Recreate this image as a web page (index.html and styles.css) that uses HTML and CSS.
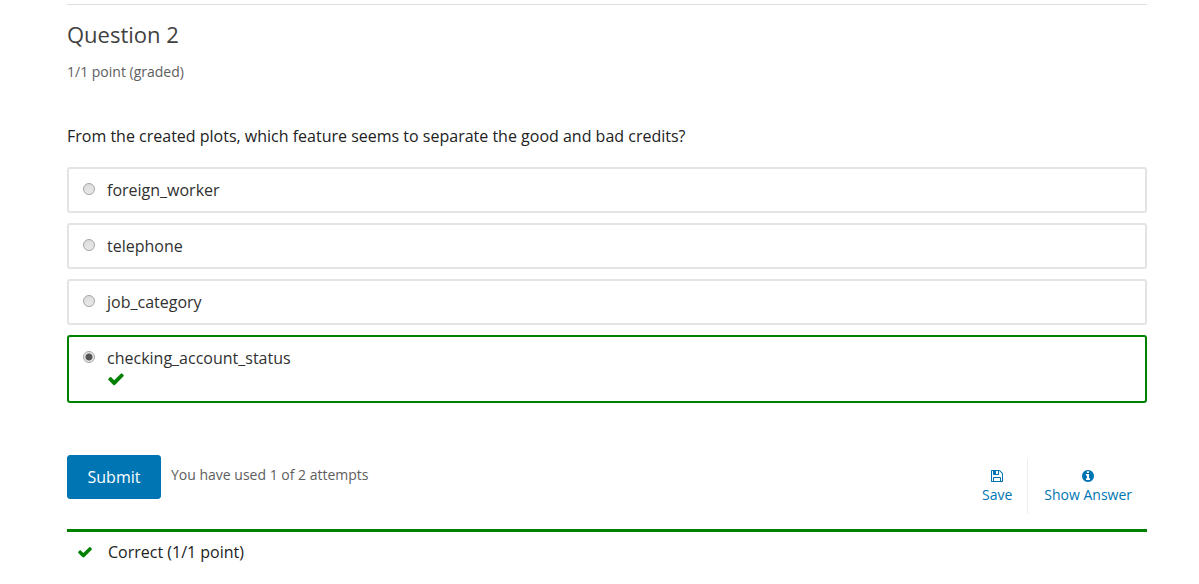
FILE: index.html
```html
<!DOCTYPE html>
<html lang="en">
<head>
<meta charset="utf-8">
<title>Question 2</title>
<link rel="stylesheet" href="styles.css">
</head>
<body>
<main class="problem">
  <h3 class="problem-header">Question 2</h3>
  <div class="problem-progress">1/1 point (graded)</div>
  <form class="problem-form">
    <fieldset class="choices">
      <legend class="question">From the created plots, which feature seems to separate the good and bad credits?</legend>
      <label class="choice"><input class="radio" type="radio" name="feature"><span>foreign_worker</span></label>
      <label class="choice"><input class="radio" type="radio" name="feature"><span>telephone</span></label>
      <label class="choice"><input class="radio" type="radio" name="feature"><span>job_category</span></label>
      <label class="choice choice-correct"><input class="radio" type="radio" name="feature" checked><span>checking_account_status</span>
        <svg class="choice-check" viewBox="0 0 1792 1792" aria-hidden="true"><path d="M1671 566q0 40-28 68l-724 724-136 136q-28 28-68 28t-68-28l-136-136-362-362q-28-28-28-68t28-68l136-136q28-28 68-28t68 28l294 295 656-657q28-28 68-28t68 28l136 136q28 28 28 68z"/></svg>
      </label>
    </fieldset>
    <div class="action">
      <button class="submit" type="button">Submit</button>
      <div class="attempts">You have used 1 of 2 attempts</div>
      <div class="tools">
        <button class="tool" type="button">
          <svg class="tool-icon" viewBox="0 0 1792 1792" aria-hidden="true"><path d="M512 1536h768v-384h-768v384zm896 0h128v-896q0-14-10-38.500t-20-34.500l-281-281q-10-10-34-20t-39-10v416q0 40-28 68t-68 28h-576q-40 0-68-28t-28-68v-416h-128v1280h128v-416q0-40 28-68t68-28h832q40 0 68 28t28 68v416zm-384-928v-320q0-13-9.500-22.500t-22.500-9.500h-192q-13 0-22.500 9.500t-9.500 22.500v320q0 13 9.500 22.500t22.500 9.500h192q13 0 22.500-9.500t9.500-22.500zm640 32v928q0 40-28 68t-68 28h-1344q-40 0-68-28t-28-68v-1344q0-40 28-68t68-28h928q40 0 88 20t76 48l280 280q28 28 48 76t20 88z"/></svg>
          <span>Save</span>
        </button>
        <button class="tool" type="button">
          <svg class="tool-icon" viewBox="0 0 1792 1792" aria-hidden="true"><path d="M1152 1376v-160q0-14-9-23t-23-9h-96v-512q0-14-9-23t-23-9h-320q-14 0-23 9t-9 23v160q0 14 9 23t23 9h96v320h-96q-14 0-23 9t-9 23v160q0 14 9 23t23 9h448q14 0 23-9t9-23zm-128-896v-160q0-14-9-23t-23-9h-192q-14 0-23 9t-9 23v160q0 14 9 23t23 9h192q14 0 23-9t9-23zm640 416q0 209-103 385.500t-279.500 279.500-385.500 103-385.500-103-279.500-279.500-103-385.500 103-385.500 279.500-279.500 385.500-103 385.500 103 279.500 279.500 103 385.500z"/></svg>
          <span>Show Answer</span>
        </button>
      </div>
    </div>
  </form>
  <div class="notification">
    <svg class="notification-check" viewBox="0 0 1792 1792" aria-hidden="true"><path d="M1671 566q0 40-28 68l-724 724-136 136q-28 28-68 28t-68-28l-136-136-362-362q-28-28-28-68t28-68l136-136q28-28 68-28t68 28l294 295 656-657q28-28 68-28t68 28l136 136q28 28 28 68z"/></svg>
    <span>Correct (1/1 point)</span>
  </div>
</main>
</body>
</html>
```
FILE: styles.css
```css
* { box-sizing: border-box; }
body {
  margin: 0;
  background: #fff;
  color: #222;
  font: 16px/24px "Open Sans", sans-serif;
}
.problem {
  margin: 4px 52px 0 67px;
  border-top: 1px solid #ddd;
  padding-top: 15px;
}
.problem-header {
  margin: 0;
  color: #414141;
  font-size: 22px;
  line-height: 28px;
  font-weight: 400;
}
.problem-progress {
  margin-top: 14px;
  color: #5e5e5e;
  font-size: 14px;
  line-height: 20px;
}
.problem-form { margin-top: 42px; }
.choices {
  display: flex;
  flex-direction: column;
  gap: 10px;
  margin: 0;
  border: 0;
  padding: 0;
}
.question {
  margin-bottom: 19px;
  padding: 0;
}
.choice {
  display: grid;
  grid-template-columns: 13px 1fr;
  column-gap: 11px;
  border: 2px solid #e4e4e4;
  border-radius: 3px;
  padding: 10px 14px;
  color: #313131;
  line-height: 22px;
}
.choice-correct { border-color: #008100; }
.radio {
  appearance: none;
  width: 12px;
  height: 12px;
  margin: 4px 0 0;
  border: 1px solid #a5a5a5;
  border-radius: 50%;
  background: linear-gradient(#ddd, #e8e8e8);
}
.radio:checked {
  background: radial-gradient(circle, #555 0 3px, #e8e8e8 4px);
}
.choice-check {
  grid-column: 2;
  width: 18px;
  height: 20px;
  margin-bottom: 2px;
  fill: #008100;
}
.action {
  display: flex;
  margin-top: 52px;
}
.submit {
  width: 94px;
  height: 44px;
  border: 1px solid #0075b4;
  border-radius: 3px;
  background: #0075b4;
  color: #fff;
  font: inherit;
}
.attempts {
  margin: 10px 0 0 10px;
  color: #5e5e5e;
  font-size: 14px;
  line-height: 20px;
}
.tools {
  display: flex;
  margin: 4px 0 0 auto;
}
.tool {
  display: flex;
  flex-direction: column;
  align-items: center;
  height: 55px;
  border: 0;
  padding: 10px 15px 0;
  background: none;
  color: #0075b4;
  font: 14px/20px "Open Sans", sans-serif;
}
.tool + .tool {
  border-left: 1px solid #eee;
  padding-left: 16px;
}
.tool-icon {
  width: 14px;
  height: 14px;
  margin-bottom: 2px;
  fill: currentColor;
}
.notification {
  display: flex;
  align-items: center;
  gap: 15px;
  margin-top: 15px;
  border-top: 3px solid #008100;
  padding: 8px 10px;
}
.notification-check {
  width: 16px;
  height: 16px;
  fill: #008100;
}
```
